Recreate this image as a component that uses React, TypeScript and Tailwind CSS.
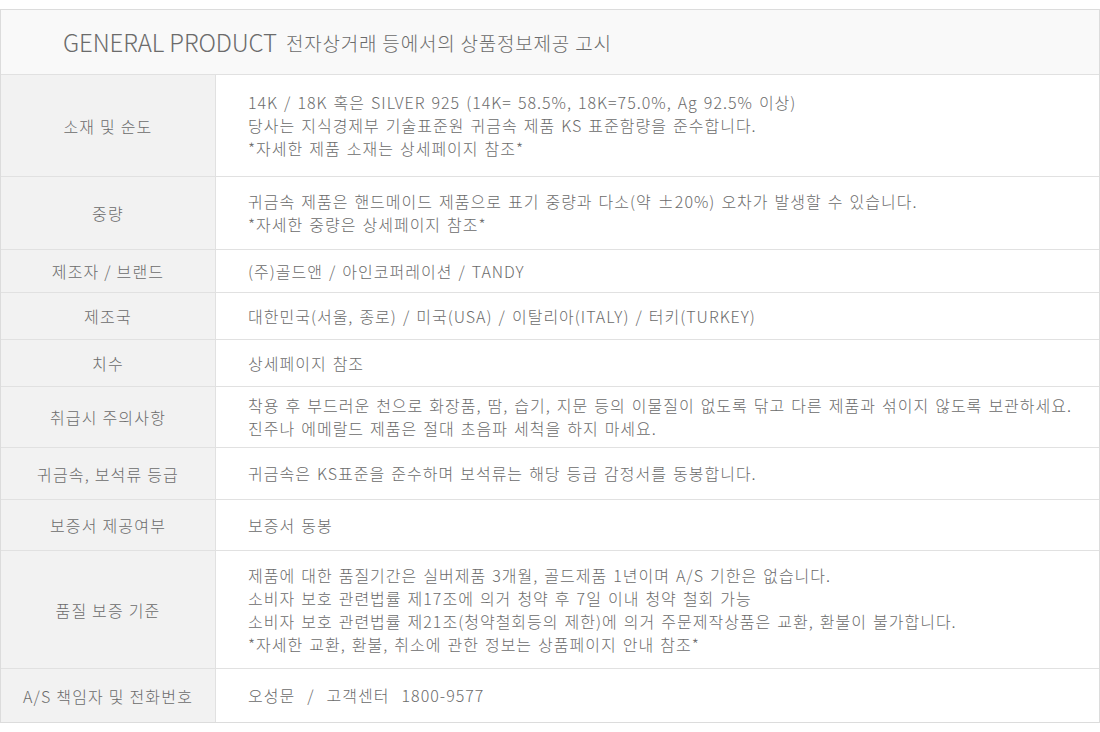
import React from 'react';

type Row = { label: string; lines: string[]; h: string };

const rows: Row[] = [
    {
        label: '소재 및 순도',
        lines: [
            '14K / 18K 혹은 SILVER 925 (14K= 58.5%, 18K=75.0%, Ag 92.5% 이상)',
            '당사는 지식경제부 기술표준원 귀금속 제품 KS 표준함량을 준수합니다.',
            '*자세한 제품 소재는 상세페이지 참조*',
        ],
        h: 'h-[102px]',
    },
    {
        label: '중량',
        lines: [
            '귀금속 제품은 핸드메이드 제품으로 표기 중량과 다소(약 ±20%) 오차가 발생할 수 있습니다.',
            '*자세한 중량은 상세페이지 참조*',
        ],
        h: 'h-[73px]',
    },
    { label: '제조자 / 브랜드', lines: ['(주)골드앤 / 아인코퍼레이션 / TANDY'], h: 'h-[43px]' },
    { label: '제조국', lines: ['대한민국(서울, 종로) / 미국(USA) / 이탈리아(ITALY) / 터키(TURKEY)'], h: 'h-[47px]' },
    { label: '치수', lines: ['상세페이지 참조'], h: 'h-[47px]' },
    {
        label: '취급시 주의사항',
        lines: [
            '착용 후 부드러운 천으로 화장품, 땀, 습기, 지문 등의 이물질이 없도록 닦고 다른 제품과 섞이지 않도록 보관하세요.',
            '진주나 에메랄드 제품은 절대 초음파 세척을 하지 마세요.',
        ],
        h: 'h-[61px]',
    },
    { label: '귀금속, 보석류 등급', lines: ['귀금속은 KS표준을 준수하며 보석류는 해당 등급 감정서를 동봉합니다.'], h: 'h-[52px]' },
    { label: '보증서 제공여부', lines: ['보증서 동봉'], h: 'h-[51px]' },
    {
        label: '품질 보증 기준',
        lines: [
            '제품에 대한 품질기간은 실버제품 3개월, 골드제품 1년이며 A/S 기한은 없습니다.',
            '소비자 보호 관련법률 제17조에 의거 청약 후 7일 이내 청약 철회 가능',
            '소비자 보호 관련법률 제21조(청약철회등의 제한)에 의거 주문제작상품은 교환, 환불이 불가합니다.',
            '*자세한 교환, 환불, 취소에 관한 정보는 상품페이지 안내 참조*',
        ],
        h: 'h-[118px]',
    },
    { label: 'A/S 책임자 및 전화번호', lines: ['오성문  /  고객센터  1800-9577'], h: 'h-[53px]' },
];

export default function App() {
    return (
        <div className="w-[1100px] h-[732px] bg-white pt-[9px] font-['Noto_Sans_CJK_KR','Noto_Sans',sans-serif] font-light text-[#6b6b6b]">
            <div className="border border-[#dcdcdc]">
                {/* 헤더 */}
                <div className="h-[65px] flex items-center pl-[62px] bg-[#f9f9f9] border-b border-[#e1e1e1]">
                    <span className="text-[24px] tracking-[-0.1px]">GENERAL PRODUCT</span>
                    <span className="text-[19px] tracking-[0.8px] ml-[9px] mt-[2px]">전자상거래 등에서의 상품정보제공 고시</span>
                </div>

                {rows.map((row, i) => (
                    <div
                        key={row.label}
                        className={`flex ${row.h} ${i < rows.length - 1 ? 'border-b border-[#e1e1e1]' : ''}`}
                    >
                        <div className="w-[215px] shrink-0 flex items-center justify-center bg-[#f2f2f2] border-r border-[#e1e1e1] text-[16px] tracking-[1.2px]">
                            {row.label}
                        </div>
                        <div className="flex-1 flex flex-col justify-center pl-[32px] text-[16px] leading-[23px] tracking-[1px] [word-spacing:1.5px] whitespace-pre">
                            {row.lines.map((l) => (
                                <div key={l}>{l}</div>
                            ))}
                        </div>
                    </div>
                ))}
            </div>
        </div>
    );
}
